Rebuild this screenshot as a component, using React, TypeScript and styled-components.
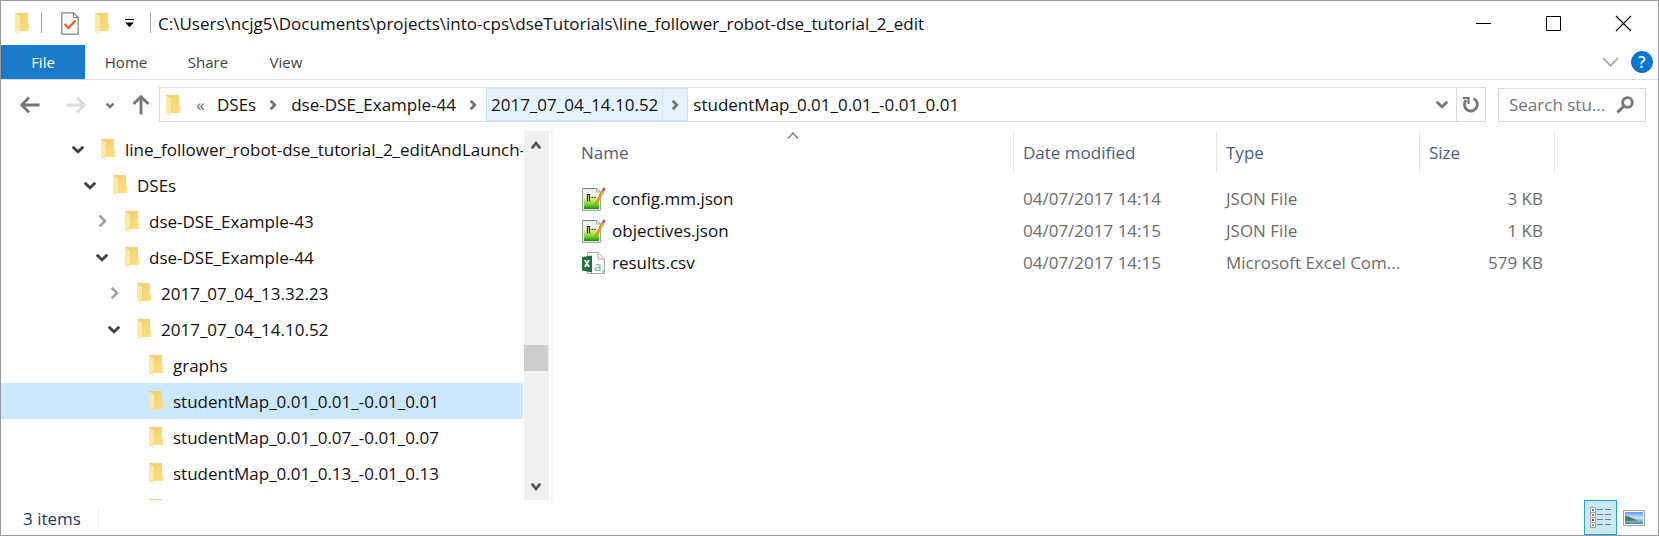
import React from "react";
import styled, { createGlobalStyle } from "styled-components";

const Global = createGlobalStyle`
  *, *::before, *::after { box-sizing: border-box; }
  html, body, #root { height: 100%; }
  body { margin: 0; background: #fff; font-family: "Open Sans", "Noto Sans", sans-serif; font-size: 17px; line-height: 24px; color: #111; }
  button, input { font: inherit; color: inherit; margin: 0; }
  ul, ol { list-style: none; margin: 0; padding: 0; }
  svg { display: block; flex: none; overflow: visible; }
`;

const Window = styled.div`
  display: flex;
  flex-direction: column;
  height: 100%;
  border: 1px solid #999;
  background: #fff;
`;

const PlainButton = styled.button`
  display: flex;
  align-items: center;
  justify-content: center;
  flex: none;
  padding: 0;
  border: 0;
  background: none;
`;

const TitleBar = styled.header`
  display: flex;
  align-items: center;
  height: 44px;
  flex: none;
`;

const QuickAccess = styled.div`
  display: flex;
  align-items: center;
  gap: 16px;
  padding-left: 14px;
`;

const WindowIcon = styled.div`
  display: flex;
  align-items: center;
  gap: 12px;
  margin-right: 3px;
`;

const Divider = styled.span<{ $height: number; $color: string }>`
  width: 1px;
  height: ${(p) => p.$height}px;
  background: ${(p) => p.$color};
`;

const Title = styled.h1`
  flex: 1;
  min-width: 0;
  margin: 0;
  padding: 1px 0 0 7px;
  font-size: 17px;
  line-height: 24px;
  font-weight: 400;
  white-space: nowrap;
  overflow: hidden;
`;

const CaptionButton = styled(PlainButton)`
  width: 70px;
  height: 43px;
`;

const Ribbon = styled.nav`
  display: flex;
  align-items: center;
  height: 35px;
  flex: none;
  border-bottom: 1px solid #dadbdc;
  padding-right: 5px;
`;

const Tab = styled(PlainButton)<{ $file?: boolean; $width: number }>`
  width: ${(p) => p.$width}px;
  height: 34px;
  font-size: 15px;
  background: ${(p) => (p.$file ? "#1979ca" : "none")};
  color: ${(p) => (p.$file ? "#fff" : "#444")};
`;

const Spacer = styled.span`
  flex: 1;
`;

const RibbonTool = styled(PlainButton)`
  width: 22px;
  height: 22px;
  margin-left: 10px;
`;

const AddressRow = styled.div`
  display: flex;
  align-items: flex-end;
  height: 51px;
  flex: none;
  padding: 0 12px 9px 17px;
`;

const NavButton = styled(PlainButton)<{ $gap?: number }>`
  width: 24px;
  height: 34px;
  margin-left: ${(p) => p.$gap ?? 0}px;
`;

const AddressBox = styled.div`
  display: flex;
  align-items: center;
  flex: 1;
  min-width: 0;
  height: 35px;
  margin-left: 6px;
  border: 1px solid #d9d9d9;
`;

const FolderSlot = styled.span`
  display: flex;
  padding: 0 9px 0 6px;
`;

const Overflow = styled(PlainButton)`
  width: 23px;
  height: 33px;
  color: #666;
`;

const Crumb = styled(PlainButton)<{ $hot?: boolean }>`
  height: 33px;
  padding: 0 4px;
  border: solid ${(p) => (p.$hot ? "#cce8ff" : "transparent")};
  border-width: 1px 0 1px 1px;
  background: ${(p) => (p.$hot ? "#e5f3ff" : "none")};
`;

const CrumbArrow = styled(PlainButton)<{ $hot?: boolean }>`
  width: 26px;
  height: 33px;
  border: 1px solid ${(p) => (p.$hot ? "#cce8ff" : "transparent")};
  background: ${(p) => (p.$hot ? "#e5f3ff" : "none")};
`;

const AddressTool = styled(PlainButton)<{ $line?: boolean }>`
  width: 29px;
  height: 33px;
  border-left: 1px solid ${(p) => (p.$line ? "#d9d9d9" : "transparent")};
`;

const SearchBox = styled.label`
  display: flex;
  align-items: center;
  width: 148px;
  height: 34px;
  flex: none;
  margin-left: 12px;
  padding: 0 11px 0 10px;
  border: 1px solid #d9d9d9;
`;

const SearchInput = styled.input`
  flex: 1;
  min-width: 0;
  padding: 0;
  border: 0;
  outline: 0;
  background: none;
  &::placeholder { color: #757575; opacity: 1; }
`;

const Body = styled.main`
  display: flex;
  flex: 1;
  min-height: 0;
`;

const Tree = styled.ul`
  flex: none;
  width: 522px;
  overflow: hidden;
`;

const TreeRow = styled.li<{ $level: number; $selected?: boolean }>`
  display: flex;
  align-items: center;
  height: 36px;
  padding-left: ${(p) => 66 + p.$level * 12}px;
  background: ${(p) => (p.$selected ? "#cce8ff" : "none")};
  white-space: nowrap;
`;

const Toggle = styled(PlainButton)`
  width: 22px;
  height: 22px;
  margin-right: 12px;
`;

const TreeLabel = styled.span`
  padding: 2px 0 0 10px;
`;

const ScrollBar = styled.div`
  display: flex;
  flex-direction: column;
  flex: none;
  width: 25px;
  margin-left: 1px;
  background: #f0f0f0;
`;

const ScrollButton = styled(PlainButton)`
  width: 24px;
  height: 28px;
`;

const ScrollTrack = styled.div`
  flex: 1;
  min-height: 0;
  padding: 186px 1px 0 0;
`;

const ScrollThumb = styled.div`
  height: 26px;
  background: #cdcdcd;
`;

const Splitter = styled.div`
  flex: none;
  width: 2px;
  margin-left: 2px;
  background: #f5f5f5;
`;

const Files = styled.section`
  flex: 1;
  min-width: 0;
  overflow: hidden;
  padding-left: 19px;
`;

const FileTable = styled.table`
  table-layout: fixed;
  width: 983px;
  border-collapse: separate;
  border-spacing: 0;
`;

const HeadCell = styled.th<{ $width: number }>`
  position: relative;
  width: ${(p) => p.$width}px;
  height: 41px;
  padding: 2px 9px 0;
  border-right: 1px solid #e5e5e5;
  text-align: left;
  font-weight: 400;
  color: #4c607a;
`;

const SortMark = styled.span`
  position: absolute;
  top: 1px;
  left: 50%;
  transform: translateX(-50%);
`;

const HeadGap = styled.tr`
  height: 11px;
`;

const Cell = styled.td<{ $right?: boolean }>`
  height: 32px;
  padding: 0 12px 0 9px;
  text-align: ${(p) => (p.$right ? "right" : "left")};
  color: #6d6d6d;
  white-space: nowrap;
`;

const FileName = styled.span`
  display: flex;
  align-items: center;
  gap: 6px;
  padding-left: 1px;
  color: #111;
`;

const StatusBar = styled.footer`
  display: flex;
  align-items: center;
  height: 35px;
  flex: none;
  padding: 0 8px 0 22px;
  color: #1e395b;
`;

const StatusText = styled.span`
  padding-top: 2px;
`;

const StatusDivider = styled(Divider)`
  margin-left: 17px;
`;

const ViewButton = styled(PlainButton)<{ $active?: boolean }>`
  width: 33px;
  height: 35px;
  border: 1px solid ${(p) => (p.$active ? "#26a0da" : "transparent")};
  background: ${(p) => (p.$active ? "#cbe8f6" : "none")};
`;

const Folder = () => (
  <svg width="14" height="20" viewBox="0 0 14 20" aria-hidden="true">
    <defs>
      <linearGradient id="folder" x1="0" y1="0" x2="1" y2="1">
        <stop offset="0" stopColor="#f0cc6e" />
        <stop offset="1" stopColor="#fcdf86" />
      </linearGradient>
    </defs>
    <path d="M0 0h13v11h1v7H4z" fill="url(#folder)" />
    <path d="M0 .5 5 3.500v12.500l-1 1v4L0 18.500z" fill="#ffe8a4" />
  </svg>
);

type ChevProps = { w: number; h: number; dir: "down" | "right" | "up"; color: string; stroke: number };
const Chev = ({ w, h, dir, color, stroke }: ChevProps) => {
  const s = stroke * 0.6;
  const d =
    dir === "down"
      ? `M${s} ${s}L${w / 2} ${h - s * 1.3}L${w - s} ${s}`
      : dir === "up"
        ? `M${s} ${h - s}L${w / 2} ${s * 1.3}L${w - s} ${h - s}`
        : `M${s} ${s}L${w - s * 1.3} ${h / 2}L${s} ${h - s}`;
  return (
    <svg width={w} height={h} viewBox={`0 0 ${w} ${h}`} fill="none" stroke={color} strokeWidth={stroke} aria-hidden="true">
      <path d={d} />
    </svg>
  );
};

const Arrow = ({ color, turn = 0 }: { color: string; turn?: number }) => (
  <svg width="20" height="20" viewBox="0 0 20 20" fill="none" stroke={color} strokeWidth="2.800" aria-hidden="true">
    <g transform={`rotate(${turn} 10 10)`}>
      <path d="M1.500 10H19.500M9 2.500 1.800 10 9 17.500" />
    </g>
  </svg>
);

const CheckPage = () => (
  <svg width="18" height="23" viewBox="0 0 18 23" fill="none" aria-hidden="true">
    <path d="M.8 .8H12.500L17.200 5.500V22.200H.8z" fill="#fafafa" stroke="#808080" strokeWidth="1.200" />
    <path d="M12.500.8V5.500H17.200" stroke="#808080" />
    <path d="M3.500 12 7.500 16 14.500 8.500" stroke="#f05a14" strokeWidth="2" />
  </svg>
);

const JsonIcon = () => (
  <svg width="24" height="24" viewBox="0 0 24 24" aria-hidden="true">
    <defs>
      <linearGradient id="page" x1="0" y1="0" x2="0" y2="1">
        <stop offset="0" stopColor="#f6f6f6" />
        <stop offset=".3" stopColor="#f0f4e2" />
        <stop offset=".5" stopColor="#d4f080" />
        <stop offset=".75" stopColor="#7ed62a" />
        <stop offset="1" stopColor="#0c8a1c" />
      </linearGradient>
    </defs>
    <path d="M.5 1.500H15L18.500 5V23.500H.5z" fill="#e8e8e8" stroke="#a4a4a4" />
    <path d="M2 3H17V22H2z" fill="url(#page)" />
    <path d="M1 1.500H15" stroke="#777" strokeWidth="1.200" strokeDasharray="2 1" />
    <path d="M14.500 1.500V5H18z" fill="#fff" stroke="#999" strokeWidth=".7" />
    <path d="M5.500 7V14.500M7.500 7V14.500M5.500 7.500H7.500M9.500 10.500H11M12 10.500H13.500" stroke="#333" strokeWidth="1.200" fill="none" />
    <path d="M13 18.500 14 14.500 20 3 22 4 16 15.500z" fill="#e7a22b" stroke="#b87814" strokeWidth=".5" />
    <path d="M20 3 21.500.5 23.500 1.500 22.300 4z" fill="#b04048" />
  </svg>
);

const CsvIcon = () => (
  <svg width="24" height="24" viewBox="0 0 24 24" aria-hidden="true">
    <path d="M5.500 1.500H16L22.500 8V22.500H5.500z" fill="#fff" stroke="#a6a6a6" />
    <path d="M16 1.500V8H22.500" fill="none" stroke="#a6a6a6" />
    <path d="M0 6 10 4.500V21.500L0 19.500z" fill="#1f7246" />
    <path d="M2.800 9 7 16M7 9 2.800 16" stroke="#fff" strokeWidth="1.700" />
    <text x="12" y="20" fontSize="13" fontWeight="600" fontFamily="Open Sans" fill="#7fc09c">a,</text>
  </svg>
);

const DetailsIcon = () => (
  <svg width="22" height="22" viewBox="0 0 22 22" aria-hidden="true">
    {["#4a78b8", "#a08040", "#b03028", "#90a890"].map((c, i) => (
      <g key={c}>
        <rect x=".5" y={0.5 + i * 5} width="5" height="5" fill="#fff" stroke="#a0a0a0" />
        <rect x="2" y={2 + i * 5} width="2" height="2" fill={c} />
        <path d={`M7 ${2.5 + i * 5}H13M15 ${2.5 + i * 5}H21`} stroke="#777c85" />
      </g>
    ))}
  </svg>
);

const PictureIcon = () => (
  <svg width="22" height="16" viewBox="0 0 22 16" aria-hidden="true">
    <defs>
      <linearGradient id="sky" x1="0" y1="0" x2="0" y2="1">
        <stop offset="0" stopColor="#5b9bf0" />
        <stop offset=".5" stopColor="#cfe6fb" />
        <stop offset=".75" stopColor="#8fb6cc" />
        <stop offset="1" stopColor="#3f7fae" />
      </linearGradient>
    </defs>
    <rect x=".5" y=".5" width="21" height="15" fill="#fff" stroke="#a0a0a0" />
    <rect x="2" y="2" width="18" height="12" fill="url(#sky)" />
    <path d="M2 6C6 6 9 8.500 16 10.500L2 11z" fill="#3f7d55" />
  </svg>
);

type Node = { name: string; level: number; state?: "open" | "closed"; selected?: boolean };
const nodes: Node[] = [
  { name: "line_follower_robot-dse_tutorial_2_editAndLaunch-", level: 0, state: "open" },
  { name: "DSEs", level: 1, state: "open" },
  { name: "dse-DSE_Example-43", level: 2, state: "closed" },
  { name: "dse-DSE_Example-44", level: 2, state: "open" },
  { name: "2017_07_04_13.32.23", level: 3, state: "closed" },
  { name: "2017_07_04_14.10.52", level: 3, state: "open" },
  { name: "graphs", level: 4 },
  { name: "studentMap_0.01_0.01_-0.01_0.01", level: 4, selected: true },
  { name: "studentMap_0.01_0.07_-0.01_0.07", level: 4 },
  { name: "studentMap_0.01_0.13_-0.01_0.13", level: 4 },
  { name: "", level: 4 },
];

const files = [
  { name: "config.mm.json", date: "04/07/2017 14:14", type: "JSON File", size: "3 KB", csv: false },
  { name: "objectives.json", date: "04/07/2017 14:15", type: "JSON File", size: "1 KB", csv: false },
  { name: "results.csv", date: "04/07/2017 14:15", type: "Microsoft Excel Com...", size: "579 KB", csv: true },
];

export default function App() {
  return (
    <>
      <Global />
      <Window>
        <TitleBar>
          <QuickAccess>
            <WindowIcon>
              <Folder />
              <Divider $height={20} $color="#999" />
            </WindowIcon>
            <PlainButton aria-label="Properties"><CheckPage /></PlainButton>
            <PlainButton aria-label="New folder"><Folder /></PlainButton>
            <PlainButton aria-label="Customise toolbar">
              <svg width="9" height="8" viewBox="0 0 9 8"><path d="M0 0H9V1H0zM0 3.500H9L4.500 8z" fill="#000" /></svg>
            </PlainButton>
            <Divider $height={20} $color="#999" />
          </QuickAccess>
          <Title>C:\Users\ncjg5\Documents\projects\into-cps\dseTutorials\line_follower_robot-dse_tutorial_2_edit</Title>
          <CaptionButton aria-label="Minimise">
            <svg width="15" height="15" viewBox="0 0 15 15"><path d="M0 7.500H15" stroke="#000" /></svg>
          </CaptionButton>
          <CaptionButton aria-label="Maximise">
            <svg width="15" height="15" viewBox="0 0 15 15"><path d="M.5.5H14.500V14.500H.5z" fill="none" stroke="#000" /></svg>
          </CaptionButton>
          <CaptionButton aria-label="Close">
            <svg width="15" height="15" viewBox="0 0 15 15"><path d="M0 0 15 15M15 0 0 15" stroke="#000" strokeWidth="1.200" /></svg>
          </CaptionButton>
        </TitleBar>

        <Ribbon>
          <Tab $file $width={84}>File</Tab>
          <Tab $width={82}>Home</Tab>
          <Tab $width={82}>Share</Tab>
          <Tab $width={74}>View</Tab>
          <Spacer />
          <RibbonTool aria-label="Expand the ribbon"><Chev w={17} h={10} dir="down" color="#a8a8a8" stroke={1.8} /></RibbonTool>
          <RibbonTool aria-label="Help">
            <svg width="22" height="22" viewBox="0 0 22 22">
              <circle cx="11" cy="11" r="10.500" fill="#0078d7" stroke="#1565a8" />
              <text x="11" y="16.500" textAnchor="middle" fontSize="16" fontFamily="Open Sans" fontWeight="600" fill="#fff">?</text>
            </svg>
          </RibbonTool>
        </Ribbon>

        <AddressRow>
          <NavButton aria-label="Back"><Arrow color="#767676" /></NavButton>
          <NavButton $gap={22} aria-label="Forward"><Arrow color="#dcdcdc" turn={180} /></NavButton>
          <NavButton $gap={10} aria-label="Recent locations"><Chev w={10} h={7} dir="down" color="#767676" stroke={2.6} /></NavButton>
          <NavButton $gap={7} aria-label="Up"><Arrow color="#767676" turn={90} /></NavButton>
          <AddressBox>
            <FolderSlot><Folder /></FolderSlot>
            <Overflow aria-label="Earlier folders">«</Overflow>
            <Crumb>DSEs</Crumb>
            <CrumbArrow aria-label="Folders in DSEs"><Chev w={8} h={12} dir="right" color="#767676" stroke={2.8} /></CrumbArrow>
            <Crumb>dse-DSE_Example-44</Crumb>
            <CrumbArrow aria-label="Folders in dse-DSE_Example-44"><Chev w={8} h={12} dir="right" color="#767676" stroke={2.8} /></CrumbArrow>
            <Crumb $hot>2017_07_04_14.10.52</Crumb>
            <CrumbArrow $hot aria-label="Folders in 2017_07_04_14.10.52"><Chev w={8} h={12} dir="right" color="#767676" stroke={2.8} /></CrumbArrow>
            <Crumb>studentMap_0.01_0.01_-0.01_0.01</Crumb>
            <Spacer />
            <AddressTool aria-label="Previous locations"><Chev w={14} h={9} dir="down" color="#767676" stroke={2.8} /></AddressTool>
            <AddressTool $line aria-label="Refresh">
              <svg width="18" height="18" viewBox="0 0 18 18" fill="none" stroke="#767676" strokeWidth="2.800">
                <path d="M11.500 2.500A6.500 6.500 0 1 1 4 4.200" />
                <path d="M1 2H6.500V8" strokeWidth="2.200" />
              </svg>
            </AddressTool>
          </AddressBox>
          <SearchBox>
            <SearchInput type="text" aria-label="Search" placeholder="Search stu..." />
            <svg width="18" height="18" viewBox="0 0 18 18" fill="none" stroke="#767676" aria-hidden="true">
              <circle cx="11.500" cy="6.500" r="4.800" strokeWidth="2.800" />
              <path d="M8 10 1.500 16.500" strokeWidth="3" />
            </svg>
          </SearchBox>
        </AddressRow>

        <Body>
          <Tree>
            {nodes.map((n, i) => (
              <TreeRow key={i} $level={n.level} $selected={n.selected}>
                <Toggle aria-label={n.state ? "Toggle " + n.name : undefined} disabled={!n.state}>
                  {n.state === "open" && <Chev w={14} h={9} dir="down" color="#404040" stroke={2.8} />}
                  {n.state === "closed" && <Chev w={9} h={14} dir="right" color="#a0a0a0" stroke={2.6} />}
                </Toggle>
                <Folder />
                <TreeLabel>{n.name}</TreeLabel>
              </TreeRow>
            ))}
          </Tree>
          <ScrollBar>
            <ScrollButton aria-label="Scroll up"><Chev w={12} h={9} dir="up" color="#555" stroke={2.8} /></ScrollButton>
            <ScrollTrack><ScrollThumb /></ScrollTrack>
            <ScrollButton aria-label="Scroll down"><Chev w={12} h={9} dir="down" color="#555" stroke={2.8} /></ScrollButton>
          </ScrollBar>
          <Splitter />
          <Files>
            <FileTable>
              <thead>
                <tr>
                  <HeadCell $width={442}>
                    Name
                    <SortMark><Chev w={11} h={7} dir="up" color="#666" stroke={1.2} /></SortMark>
                  </HeadCell>
                  <HeadCell $width={203}>Date modified</HeadCell>
                  <HeadCell $width={203}>Type</HeadCell>
                  <HeadCell $width={135}>Size</HeadCell>
                </tr>
              </thead>
              <tbody>
                <HeadGap />
                {files.map((f) => (
                  <tr key={f.name}>
                    <Cell><FileName>{f.csv ? <CsvIcon /> : <JsonIcon />}{f.name}</FileName></Cell>
                    <Cell>{f.date}</Cell>
                    <Cell>{f.type}</Cell>
                    <Cell $right>{f.size}</Cell>
                  </tr>
                ))}
              </tbody>
            </FileTable>
          </Files>
        </Body>

        <StatusBar>
          <StatusText>3 items</StatusText>
          <StatusDivider $height={17} $color="#eee" />
          <Spacer />
          <ViewButton $active aria-label="Details view"><DetailsIcon /></ViewButton>
          <ViewButton aria-label="Large icons view"><PictureIcon /></ViewButton>
        </StatusBar>
      </Window>
    </>
  );
}
